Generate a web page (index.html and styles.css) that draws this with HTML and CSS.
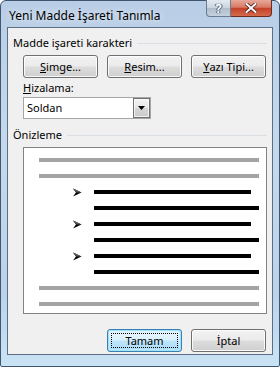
FILE: index.html
```html
<!DOCTYPE html>
<html lang="tr">
<head>
<meta charset="utf-8">
<title>Yeni Madde İşareti Tanımla</title>
<link rel="stylesheet" href="styles.css">
</head>
<body>
<div class="window">
  <div class="titlebar">
    <span class="title">Yeni Madde İşareti Tanımla</span>
    <div class="caption">
      <div class="cap-help">?</div>
      <div class="cap-close">
        <svg width="12" height="10" viewBox="0 0 12 10"><path d="M1.5 1 L10.5 9 M10.5 1 L1.5 9" stroke="#4a1a12" stroke-width="3.6" stroke-linecap="square"/><path d="M1.5 1 L10.5 9 M10.5 1 L1.5 9" stroke="#ffffff" stroke-width="2" stroke-linecap="square"/></svg>
      </div>
    </div>
  </div>
  <div class="client">
    <div class="group-label">Madde işareti karakteri</div>
    <div class="btn-row">
      <button class="btn"><u>S</u>imge...</button>
      <button class="btn"><u>R</u>esim...</button>
      <button class="btn"><u>Y</u>azı Tipi...</button>
    </div>
    <div class="field-label"><u>H</u>izalama:</div>
    <div class="select">
      <span class="select-text">Soldan</span>
      <span class="select-btn">
        <svg width="7" height="4" viewBox="0 0 7 4"><path d="M0 0 H7 L3.5 4 Z" fill="#000"/></svg>
      </span>
    </div>
    <div class="group-label preview-label">Önizleme</div>
    <div class="preview">
      <div class="pline gray"></div>
      <div class="pline gray"></div>
      <div class="brow"><svg class="bullet" width="9" height="9" viewBox="0 0 9 9"><path d="M0 0.5 L8.5 4.5 L0 8.5 L3 4.5 Z" fill="#000"/><path d="M0 0.5 L8.5 4.5 L3 4.5 Z" fill="#555"/></svg><div class="bl short"></div></div>
      <div class="pline long"></div>
      <div class="brow"><svg class="bullet" width="9" height="9" viewBox="0 0 9 9"><path d="M0 0.5 L8.5 4.5 L0 8.5 L3 4.5 Z" fill="#000"/><path d="M0 0.5 L8.5 4.5 L3 4.5 Z" fill="#555"/></svg><div class="bl short"></div></div>
      <div class="pline long"></div>
      <div class="brow"><svg class="bullet" width="9" height="9" viewBox="0 0 9 9"><path d="M0 0.5 L8.5 4.5 L0 8.5 L3 4.5 Z" fill="#000"/><path d="M0 0.5 L8.5 4.5 L3 4.5 Z" fill="#555"/></svg><div class="bl short"></div></div>
      <div class="pline long"></div>
      <div class="pline gray"></div>
      <div class="pline gray"></div>
    </div>
    <div class="footer">
      <button class="btn default"><span class="focus">Tamam</span></button>
      <button class="btn">İptal</button>
    </div>
  </div>
</div>
</body>
</html>
```
FILE: styles.css
```css
* { box-sizing: border-box; }
html, body { margin: 0; padding: 0; }
body {
  width: 280px;
  height: 367px;
  overflow: hidden;
  font-family: "Noto Sans", "DejaVu Sans", sans-serif;
  font-size: 11px;
  color: #000;
  background: #fff;
}
.window {
  width: 280px;
  height: 367px;
  border: 1px solid #3f5670;
  border-radius: 6px 6px 2px 2px;
  background: linear-gradient(to bottom, #b9cee6 0%, #c6d8ec 40%, #bcd2ea 80%, #c9e3f5 100%);
  display: flex;
  flex-direction: column;
  padding: 0 6px 11px 6px;
}
.titlebar {
  height: 26px;
  display: flex;
  align-items: flex-start;
  flex: none;
}
.title {
  font-size: 12px;
  margin-top: 6px;
  margin-left: 2px;
  color: #000;
  text-shadow: 0 0 6px rgba(255,255,255,0.9);
}
.caption {
  margin-left: auto;
  margin-right: 1px;
  display: flex;
  height: 17px;
  margin-top: -1px;
}
.cap-help {
  width: 25px;
  height: 17px;
  border: 1px solid #6a7c92;
  border-top: none;
  border-radius: 0 0 0 4px;
  background: linear-gradient(to bottom, #e4eaf1 0%, #cbd5e1 48%, #b0bdcc 52%, #c4d0dd 100%);
  color: #fff;
  font-size: 13px;
  font-weight: bold;
  text-align: center;
  line-height: 16px;
  text-shadow: 0 0 1px #3a4a5c, 0 0 1px #3a4a5c, 1px 0 0 #56687d, -1px 0 0 #56687d;
}
.cap-close {
  width: 41px;
  height: 17px;
  border: 1px solid #6e2b20;
  border-left: none;
  border-top: none;
  border-radius: 0 0 4px 0;
  background: linear-gradient(to bottom, #e6a99a 0%, #d97a66 45%, #c54128 52%, #d36a4d 100%);
  display: flex;
  align-items: center;
  justify-content: center;
}
.client {
  flex: 1;
  border: 1px solid #5d6f86;
  background: #f0f0f0;
  padding: 7px 5px 0 5px;
  display: flex;
  flex-direction: column;
}
.group-label {
  display: flex;
  align-items: center;
  height: 15px;
  line-height: 15px;
  white-space: nowrap;
}
.group-label::after {
  content: "";
  flex: 1;
  border-top: 1px solid #d9dfe4;
  margin-left: 5px;
  margin-top: 1px;
}
.btn-row {
  display: flex;
  gap: 9px;
  margin: 5px 0 0 10px;
}
.btn {
  width: 75px;
  height: 23px;
  padding: 0;
  font-family: inherit;
  font-size: 11px;
  color: #000;
  border: 1px solid #707070;
  border-radius: 3px;
  background: linear-gradient(to bottom, #f2f2f2 0%, #ebebeb 48%, #dddddd 52%, #cfcfcf 100%);
  box-shadow: inset 0 0 0 1px rgba(255,255,255,0.85);
  display: flex;
  align-items: center;
  justify-content: center;
}
.field-label {
  margin: 3px 0 0 10px;
  height: 14px;
  line-height: 14px;
}
.select {
  margin: 2px 0 0 10px;
  width: 128px;
  height: 22px;
  border: 1px solid #a6a6a6;
  background: #fff;
  display: flex;
  align-items: stretch;
}
.select-text {
  flex: 1;
  padding-left: 3px;
  line-height: 20px;
}
.select-btn {
  width: 17px;
  border: 1px solid #707070;
  background: linear-gradient(to bottom, #f2f2f2 0%, #e6e6e6 48%, #d6d6d6 52%, #cacaca 100%);
  box-shadow: inset 0 0 0 1px rgba(255,255,255,0.7);
  display: flex;
  align-items: center;
  justify-content: center;
}
.preview-label {
  margin-top: 8px;
}
.preview {
  margin: 5px 0 0 10px;
  width: 244px;
  height: 167px;
  border: 1px solid #838383;
  background: #fff;
  display: flex;
  flex-direction: column;
  gap: 12px;
  padding-top: 10px;
}
.pline {
  height: 4px;
  flex: none;
}
.gray {
  background: #a3a3a3;
  margin-left: 15px;
  width: 220px;
}
.long {
  background: #000;
  margin-left: 70px;
  width: 165px;
}
.brow {
  height: 4px;
  flex: none;
  display: flex;
  align-items: center;
  padding-left: 49px;
}
.bullet {
  flex: none;
}
.bl {
  height: 4px;
  background: #000;
  margin-left: 12px;
  width: 157px;
}
.footer {
  display: flex;
  justify-content: flex-end;
  gap: 9px;
  margin: 15px 1px 0 0;
}
.btn.default {
  border-color: #3c7fb1;
  box-shadow: inset 0 0 0 1px #9fe3f9, inset 0 0 0 2px rgba(200,240,255,0.6);
  background: linear-gradient(to bottom, #eaf6fd 0%, #d9f0fc 48%, #bee6fd 52%, #a7d9f5 100%);
  padding: 3px;
}
.focus {
  flex: 1;
  align-self: stretch;
  border: 1px dotted #000;
  display: flex;
  align-items: center;
  justify-content: center;
}
```
